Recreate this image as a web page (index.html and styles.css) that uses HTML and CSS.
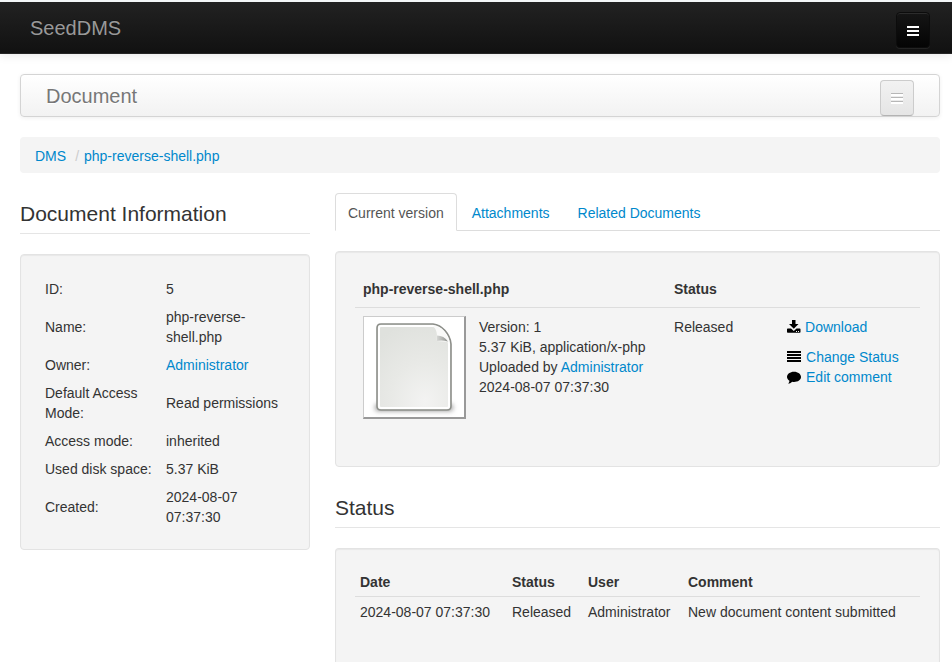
FILE: index.html
```html
<!DOCTYPE html>
<html lang="en">
<head>
<meta charset="utf-8">
<title>SeedDMS</title>
<link rel="stylesheet" href="styles.css">
</head>
<body>
<header class="topbar">
  <a class="brand">SeedDMS</a>
  <button class="btn dark" aria-label="Menu"><span class="bar"></span><span class="bar"></span><span class="bar"></span></button>
</header>
<main>
  <nav class="subnav">
    <a class="brand">Document</a>
    <button class="btn light" aria-label="Document menu"><span class="bar"></span><span class="bar"></span><span class="bar"></span></button>
  </nav>
  <div class="breadcrumb"><a>DMS</a><span class="divider">/</span><a>php-reverse-shell.php</a></div>
  <div class="columns">
    <section class="info">
      <h2>Document Information</h2>
      <div class="well">
        <table class="details">
          <tr><td class="key">ID:</td><td>5</td></tr>
          <tr><td>Name:</td><td>php-reverse-<br>shell.php</td></tr>
          <tr><td>Owner:</td><td><a>Administrator</a></td></tr>
          <tr><td>Default Access<br>Mode:</td><td>Read permissions</td></tr>
          <tr><td>Access mode:</td><td>inherited</td></tr>
          <tr><td>Used disk space:</td><td>5.37 KiB</td></tr>
          <tr><td>Created:</td><td>2024-08-07<br>07:37:30</td></tr>
        </table>
      </div>
    </section>
    <section class="content">
      <div class="tabs"><a class="tab active">Current version</a><a class="tab">Attachments</a><a class="tab">Related Documents</a></div>
      <div class="well version-well">
        <table class="version">
          <colgroup><col class="v1"><col class="v2"><col class="v3"><col></colgroup>
          <tr><th colspan="2">php-reverse-shell.php</th><th>Status</th><th></th></tr>
          <tr>
            <td>
              <div class="thumb">
                <svg width="100" height="100" viewBox="0 0 100 100">
                  <defs>
                    <radialGradient id="paper" cx=".65" cy=".9" r=".95"><stop offset="0" stop-color="#f3f3f2"/><stop offset=".5" stop-color="#e8e9e6"/><stop offset="1" stop-color="#dfe1dd"/></radialGradient>
                    <linearGradient id="curl" x1="0" y1="0" x2="1" y2="0"><stop offset="0" stop-color="#d8d9d7"/><stop offset="1" stop-color="#8f918d"/></linearGradient>
                    <filter id="soft" x="-20%" y="-100%" width="140%" height="300%"><feGaussianBlur stdDeviation="2.6"/></filter>
                  </defs>
                  <rect x="11" y="87" width="78" height="7" rx="3" fill="#999" filter="url(#soft)"/>
                  <path d="M17 7H69C78 8 86 17 87 27V89Q87 93 83 93H17Q13 93 13 89V11Q13 7 17 7Z" fill="url(#paper)" stroke="#8c8e89" stroke-width="1.6"/>
                  <path d="M17 9H69C77 10 84 18 85 27V89Q85 91 83 91H17Q15 91 15 89V11Q15 9 17 9Z" fill="none" stroke="#fff" stroke-width="2"/>
                  <path d="M69 9C73 13 73.500 17 72.500 24L85 25C83 16 77 9 69 9Z" fill="#f9f9f8"/>
                  <path d="M72.500 24C73 22 73 20.500 73 18.500C77.500 18.500 81.500 20.500 84 24.500Q78 22.800 72.500 24Z" fill="url(#curl)"/>
                </svg>
              </div>
            </td>
            <td>Version: 1<br>5.37 KiB, application/x-php<br>Uploaded by <a>Administrator</a><br>2024-08-07 07:37:30</td>
            <td>Released</td>
            <td>
              <div class="actions">
                <div class="action download"><svg width="14" height="14" viewBox="0 0 14 14"><path d="M5 0H8.500V4H11.500L6.800 8.700L2 4H5ZM.8 8.500H4L6.800 11L9.500 8.500H12.700Q13.500 8.500 13.500 9.300V12Q13.500 12.700 12.700 12.700H.8Q0 12.700 0 12V9.300Q0 8.500 .8 8.500Z"/><path class="lights" d="M9 11h1v1H9zM11 11h1v1h-1z"/></svg><a>Download</a></div>
                <div class="action"><svg width="14" height="14" viewBox="0 0 14 14" shape-rendering="crispEdges"><path d="M0 1h14v2H0zM0 4h14v2H0zM0 7h14v2H0zM0 10h14v2H0z"/></svg><a>Change Status</a></div>
                <div class="action"><svg width="14" height="14" viewBox="0 0 14 14"><path d="M7 1.700C11 1.700 14 4 14 7S11 11.900 7 11.900Q6 11.900 5.200 11.700C4 12.900 2.500 13.600 1 13.600C2 12.800 2.400 11.800 2.400 10.700C1 9.900 0 8.400 0 7C0 4 3 1.700 7 1.700Z"/></svg><a>Edit comment</a></div>
              </div>
            </td>
          </tr>
        </table>
      </div>
      <h2>Status</h2>
      <div class="well status-well">
        <table class="history">
          <colgroup><col class="h1"><col class="h2"><col class="h3"><col></colgroup>
          <tr><th>Date</th><th>Status</th><th>User</th><th>Comment</th></tr>
          <tr><td>2024-08-07 07:37:30</td><td>Released</td><td>Administrator</td><td>New document content submitted</td></tr>
        </table>
      </div>
    </section>
  </div>
</main>
</body>
</html>
```
FILE: styles.css
```css
* { box-sizing: border-box; }
body {
  margin: 0;
  border-top: 2px solid #f3f6f8;
  background: #fff;
  color: #333;
  font: 14px/20px "Liberation Sans", Arial, sans-serif;
}
a { color: #0088cc; text-decoration: none; }
.topbar {
  display: flex;
  justify-content: space-between;
  align-items: flex-start;
  height: 52px;
  padding: 10px 22px 0 30px;
  background: linear-gradient(#222, #111);
  border-bottom: 1px solid #252525;
  box-shadow: 0 1px 10px rgba(0, 0, 0, .1);
}
.brand { font-size: 20px; }
.topbar .brand { margin-top: 6px; color: #999; text-shadow: 0 -1px 0 rgba(0, 0, 0, .25); }
.btn {
  display: flex;
  flex-direction: column;
  align-items: center;
  gap: 2px;
  width: 34px;
  padding: 0;
  border-radius: 4px;
}
.bar { width: 12px; height: 2px; }
.dark {
  height: 36px;
  padding-top: 13px;
  border: 1px solid #0c0c0c;
  background: linear-gradient(#151515, #040404);
  box-shadow: inset 0 1px 0 rgba(255, 255, 255, .1), 0 1px 0 rgba(255, 255, 255, .075);
}
.dark .bar { background: #fff; }
.light {
  height: 36px;
  gap: 1px;
  padding-top: 12px;
  border: 1px solid #ccc;
  border-bottom-color: #b3b3b3;
  background: linear-gradient(#f2f2f2, #e5e5e5);
}
.light .bar { height: 3px; background: #fff; border-top: 1px solid #b7b7b7; }
main { padding: 20px 12px 0 20px; }
.subnav {
  display: flex;
  justify-content: space-between;
  align-items: flex-start;
  height: 43px;
  padding: 5px 25px 0;
  border: 1px solid #d4d4d4;
  border-radius: 4px;
  background: linear-gradient(#fff, #f2f2f2);
  box-shadow: 0 1px 4px rgba(0, 0, 0, .065);
}
.subnav .brand { margin-top: 6px; color: #777; text-shadow: 0 1px 0 #fff; }
.breadcrumb {
  margin: 20px 0;
  padding: 9px 15px 7px;
  height: 36px;
  border-radius: 4px;
  background: #f4f4f4;
}
.divider { padding: 0 5px 0 9px; color: #ccc; }
.columns { display: grid; grid-template-columns: 290px 605px; gap: 25px; align-items: start; }
h2 {
  margin: 0 0 20px;
  height: 41px;
  border-bottom: 1px solid #e5e5e5;
  font-size: 21px;
  font-weight: normal;
  line-height: 41px;
}
.well {
  padding: 19px;
  border: 1px solid #e3e3e3;
  border-radius: 4px;
  background: #f4f4f4;
  box-shadow: inset 0 1px 1px rgba(0, 0, 0, .05);
}
table { width: 100%; table-layout: fixed; border-spacing: 0; }
th { text-align: left; }
th, td { white-space: nowrap; }
.details td { padding: 5px 5px 3px; vertical-align: middle; }
.details .key { width: 121px; }
.tabs { display: flex; gap: 2px; height: 38px; border-bottom: 1px solid #ddd; }
.tab { height: 38px; padding: 9px 12px 7px; border: 1px solid transparent; border-radius: 4px 4px 0 0; }
.tab.active { color: #555; background: #fff; border-color: #ddd #ddd #fff; }
.version-well { height: 216px; margin: 20px 0; }
.version th { height: 36px; padding: 7px 8px; }
.version td { padding: 9px 8px 7px; border-top: 1px solid #ddd; vertical-align: top; }
.v1 { width: 116px; }
.v2 { width: 195px; }
.v3 { width: 113px; }
.thumb {
  width: 103px;
  height: 103px;
  margin-top: -1px;
  background: #fff;
  border: 1px solid #ccc;
  border-right: 2px solid #999;
  border-bottom: 2px solid #999;
}
.thumb svg { display: block; }
.action { display: flex; align-items: center; gap: 5px; }
.action svg { flex: none; }
.download { gap: 4px; margin-bottom: 10px; }
.lights { fill: #f4f4f4; }
.status-well {
  height: 114px;
  border-bottom: 0;
  border-radius: 4px 4px 0 0;
}
.history th { height: 28px; padding: 4px 5px; }
.history td { padding: 5px 5px 3px; border-top: 1px solid #ddd; }
.h1 { width: 152px; }
.h2 { width: 76px; }
.h3 { width: 100px; }
```
